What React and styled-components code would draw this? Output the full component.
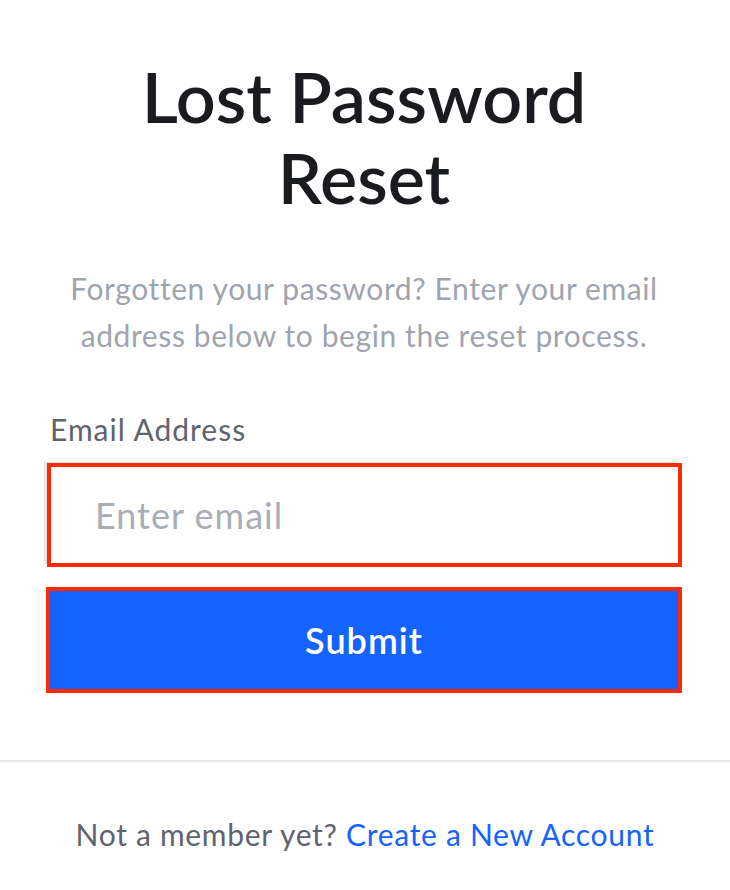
import React from "react";
import styled, { createGlobalStyle } from "styled-components";

const Global = createGlobalStyle`
  body {
    margin: 0;
    background: #ffffff;
    font-family: Lato, "Noto Sans", sans-serif;
  }
`;

const Page = styled.div`
  display: flex;
  flex-direction: column;
`;

const Form = styled.form`
  display: flex;
  flex-direction: column;
  padding: 56px 48px 67px 46px;
`;

const Title = styled.h1`
  margin: 0;
  font-size: 70px;
  line-height: 81px;
  font-weight: 600;
  color: #1a1b1f;
  text-align: center;
`;

const Intro = styled.p`
  margin: 47px 0 0;
  font-size: 30px;
  line-height: 47px;
  letter-spacing: 0.6px;
  color: #a0a4ad;
  text-align: center;
`;

const Label = styled.label`
  margin-top: 52px;
  padding-left: 4px;
  font-size: 30px;
  line-height: 36px;
  letter-spacing: 1px;
  color: #5f636d;
`;

const Input = styled.input`
  margin-top: 16px;
  margin-left: 1px;
  height: 104px;
  box-sizing: border-box;
  border: 4px solid #ff2a00;
  box-shadow: -4px -2px 0 -1px #e4e5e8;
  padding: 0 44px;
  font-family: inherit;
  font-size: 36px;
  letter-spacing: 1px;
  color: #1a1b1f;
  outline: none;
  &::placeholder {
    color: #a9adb5;
  }
`;

const Submit = styled.button`
  margin-top: 20px;
  height: 106px;
  border: 4px solid #ff2a00;
  background: #1463ff;
  color: #ffffff;
  font-family: inherit;
  font-size: 36px;
  font-weight: 600;
  letter-spacing: 1px;
  cursor: pointer;
`;

const Divider = styled.hr`
  margin: 0;
  border: none;
  border-top: 2px solid #e8e8e8;
`;

const Footer = styled.p`
  margin: 0;
  padding: 54px 0 40px;
  text-align: center;
  font-size: 30px;
  line-height: 36px;
  letter-spacing: 0.7px;
  color: #5f636d;
`;

const Link = styled.a`
  color: #1463ff;
  text-decoration: none;
`;

export default function App() {
  return (
    <Page>
      <Global />
      <Form onSubmit={(e) => e.preventDefault()}>
        <Title>
          Lost Password
          <br />
          Reset
        </Title>
        <Intro>
          Forgotten your password? Enter your email
          <br />
          address below to begin the reset process.
        </Intro>
        <Label htmlFor="email">Email Address</Label>
        <Input id="email" type="email" placeholder="Enter email" />
        <Submit type="submit">Submit</Submit>
      </Form>
      <Divider />
      <Footer>
        Not a member yet? <Link href="#">Create a New Account</Link>
      </Footer>
    </Page>
  );
}
